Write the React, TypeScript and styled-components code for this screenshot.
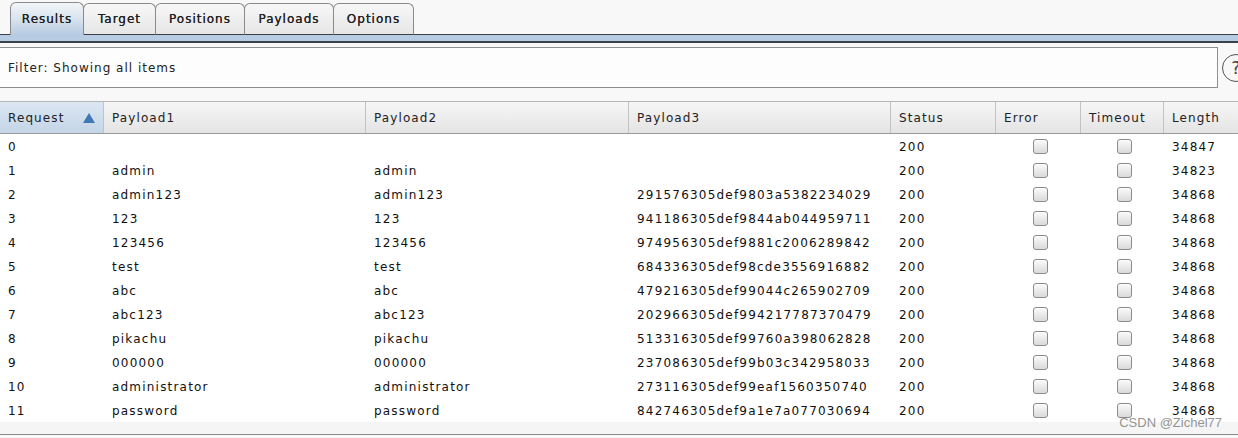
import React from "react";
import styled, { createGlobalStyle } from "styled-components";

const GlobalStyle = createGlobalStyle`
    html, body {
        margin: 0;
        padding: 0;
        background: #f8f8f8;
        font-family: "DejaVu Sans", Verdana, sans-serif;
        overflow: hidden;
    }
`;

const Page = styled.div`
    position: relative;
    width: 1238px;
    height: 438px;
    overflow: hidden;
    display: flex;
    flex-direction: column;
`;

const TabRow = styled.div`
    display: flex;
    align-items: flex-end;
    height: 35px;
`;

const TabFiller = styled.div<{ $grow?: boolean }>`
    width: 10px;
    flex: ${(p) => (p.$grow ? 1 : "none")};
    border-bottom: 1px solid #3c4048;
`;

const Tab = styled.div<{ $active?: boolean; $w: number }>`
    box-sizing: border-box;
    flex: none;
    width: ${(p) => p.$w}px;
    height: ${(p) => (p.$active ? "33px" : "32px")};
    display: flex;
    align-items: center;
    justify-content: center;
    font-size: 12px;
    letter-spacing: 1px;
    color: #222;
    border: 1px solid #8a8a8a;
    border-bottom: ${(p) => (p.$active ? "none" : "1px solid #3c4048")};
    border-radius: 6px 6px 0 0;
    margin-right: -1px;
    background: ${(p) =>
        p.$active
            ? "linear-gradient(#f2f5f9, #dbe5ef 45%, #b6cbe1)"
            : "linear-gradient(#f7f7f7, #e6e6e6)"};
    text-shadow: 0 0 0.4px #222;
    position: relative;
    z-index: ${(p) => (p.$active ? 1 : 0)};
`;

const Band = styled.div`
    height: 6px;
    background: #b7cce2;
    border-bottom: 2px solid #3c4048;
`;

const FilterRow = styled.div`
    display: flex;
    align-items: center;
    margin-top: 4px;
    gap: 4px;
`;

const FilterBox = styled.div`
    box-sizing: border-box;
    flex: none;
    width: 1218px;
    height: 41px;
    border: 1px solid #8f8f8f;
    border-left: none;
    background: #fdfdfd;
    display: flex;
    align-items: center;
    padding-left: 8px;
    font-size: 12px;
    letter-spacing: 1px;
    color: #222;
`;

const Help = styled.div`
    flex: none;
    box-sizing: border-box;
    width: 28px;
    height: 28px;
    border: 1.5px solid #555;
    border-radius: 50%;
    display: flex;
    align-items: center;
    justify-content: center;
    font-size: 18px;
    color: #444;
`;

const Table = styled.div`
    margin-top: 13px;
    display: flex;
    flex-direction: column;
    flex: 1;
    border-bottom: 1px solid #8c8c8c;
    background: #f5f5f5;
    margin-bottom: 3px;
`;

const cols = "104px 262px 263px 262px 105px 85px 83px 74px";

const HeaderRow = styled.div`
    display: grid;
    grid-template-columns: ${cols};
    height: 33px;
    box-sizing: border-box;
    border-top: 1px solid #b5b5b5;
    border-bottom: 1px solid #9a9a9a;
`;

const HeadCell = styled.div<{ $sorted?: boolean }>`
    display: flex;
    align-items: center;
    justify-content: space-between;
    padding: 0 8px;
    font-size: 12px;
    letter-spacing: 1.1px;
    color: #222;
    border-right: 1px solid #c2c2c2;
    background: ${(p) =>
        p.$sorted
            ? "linear-gradient(#dce7f2, #c3d5e7)"
            : "linear-gradient(#f6f6f6, #e4e4e4)"};
    &:last-child {
        border-right: none;
    }
`;

const Body = styled.div`
    background: #fff;
`;

const Row = styled.div`
    display: grid;
    grid-template-columns: ${cols};
    height: 24px;
    align-items: center;
`;

const Cell = styled.div<{ $center?: boolean }>`
    padding-left: ${(p) => (p.$center ? "0" : "8px")};
    padding-top: 1px;
    display: flex;
    justify-content: ${(p) => (p.$center ? "center" : "flex-start")};
    font-size: 12px;
    letter-spacing: 1.2px;
    color: #111;
    white-space: nowrap;
`;

const Check = styled.div`
    box-sizing: border-box;
    width: 15px;
    height: 15px;
    border: 1px solid #8c8c8c;
    border-radius: 3px;
    background: linear-gradient(#fbfbfb, #dadada);
    margin-left: 3px;
`;

const Watermark = styled.div`
    position: absolute;
    right: 16px;
    bottom: 8px;
    font-family: "Liberation Sans", Arial, sans-serif;
    font-size: 13px;
    color: rgba(120, 120, 120, 0.8);
`;

const SortArrow = () => (
    <svg width="12" height="10" viewBox="0 0 12 10">
        <path d="M6 0 L12 10 L0 10 Z" fill="#3f78b5" />
    </svg>
);

interface ResultRow {
    id: number;
    p1: string;
    p2: string;
    p3: string;
    status: number;
    length: number;
}

const rows: ResultRow[] = [
    { id: 0, p1: "", p2: "", p3: "", status: 200, length: 34847 },
    { id: 1, p1: "admin", p2: "admin", p3: "", status: 200, length: 34823 },
    { id: 2, p1: "admin123", p2: "admin123", p3: "291576305def9803a5382234029", status: 200, length: 34868 },
    { id: 3, p1: "123", p2: "123", p3: "941186305def9844ab044959711", status: 200, length: 34868 },
    { id: 4, p1: "123456", p2: "123456", p3: "974956305def9881c2006289842", status: 200, length: 34868 },
    { id: 5, p1: "test", p2: "test", p3: "684336305def98cde3556916882", status: 200, length: 34868 },
    { id: 6, p1: "abc", p2: "abc", p3: "479216305def99044c265902709", status: 200, length: 34868 },
    { id: 7, p1: "abc123", p2: "abc123", p3: "202966305def994217787370479", status: 200, length: 34868 },
    { id: 8, p1: "pikachu", p2: "pikachu", p3: "513316305def99760a398062828", status: 200, length: 34868 },
    { id: 9, p1: "000000", p2: "000000", p3: "237086305def99b03c342958033", status: 200, length: 34868 },
    { id: 10, p1: "administrator", p2: "administrator", p3: "273116305def99eaf1560350740", status: 200, length: 34868 },
    { id: 11, p1: "password", p2: "password", p3: "842746305def9a1e7a077030694", status: 200, length: 34868 },
];

const tabs = [
    { label: "Results", w: 74 },
    { label: "Target", w: 73 },
    { label: "Positions", w: 90 },
    { label: "Payloads", w: 90 },
    { label: "Options", w: 81 },
];

const App = () => {
    return (
        <>
            <GlobalStyle />
            <Page>
                <TabRow>
                    <TabFiller />
                    {tabs.map((t, i) => (
                        <Tab key={t.label} $active={i === 0} $w={t.w}>
                            {t.label}
                        </Tab>
                    ))}
                    <TabFiller $grow />
                </TabRow>
                <Band />
                <FilterRow>
                    <FilterBox>Filter: Showing all items</FilterBox>
                    <Help>?</Help>
                </FilterRow>
                <Table>
                    <HeaderRow>
                        <HeadCell $sorted>
                            Request <SortArrow />
                        </HeadCell>
                        <HeadCell>Payload1</HeadCell>
                        <HeadCell>Payload2</HeadCell>
                        <HeadCell>Payload3</HeadCell>
                        <HeadCell>Status</HeadCell>
                        <HeadCell>Error</HeadCell>
                        <HeadCell>Timeout</HeadCell>
                        <HeadCell>Length</HeadCell>
                    </HeaderRow>
                    <Body>
                        {rows.map((r) => (
                            <Row key={r.id}>
                                <Cell>{r.id}</Cell>
                                <Cell>{r.p1}</Cell>
                                <Cell>{r.p2}</Cell>
                                <Cell>{r.p3}</Cell>
                                <Cell>{r.status}</Cell>
                                <Cell $center>
                                    <Check />
                                </Cell>
                                <Cell $center>
                                    <Check />
                                </Cell>
                                <Cell>{r.length}</Cell>
                            </Row>
                        ))}
                    </Body>
                </Table>
                <Watermark>CSDN @Zichel77</Watermark>
            </Page>
        </>
    );
};

export default App;
